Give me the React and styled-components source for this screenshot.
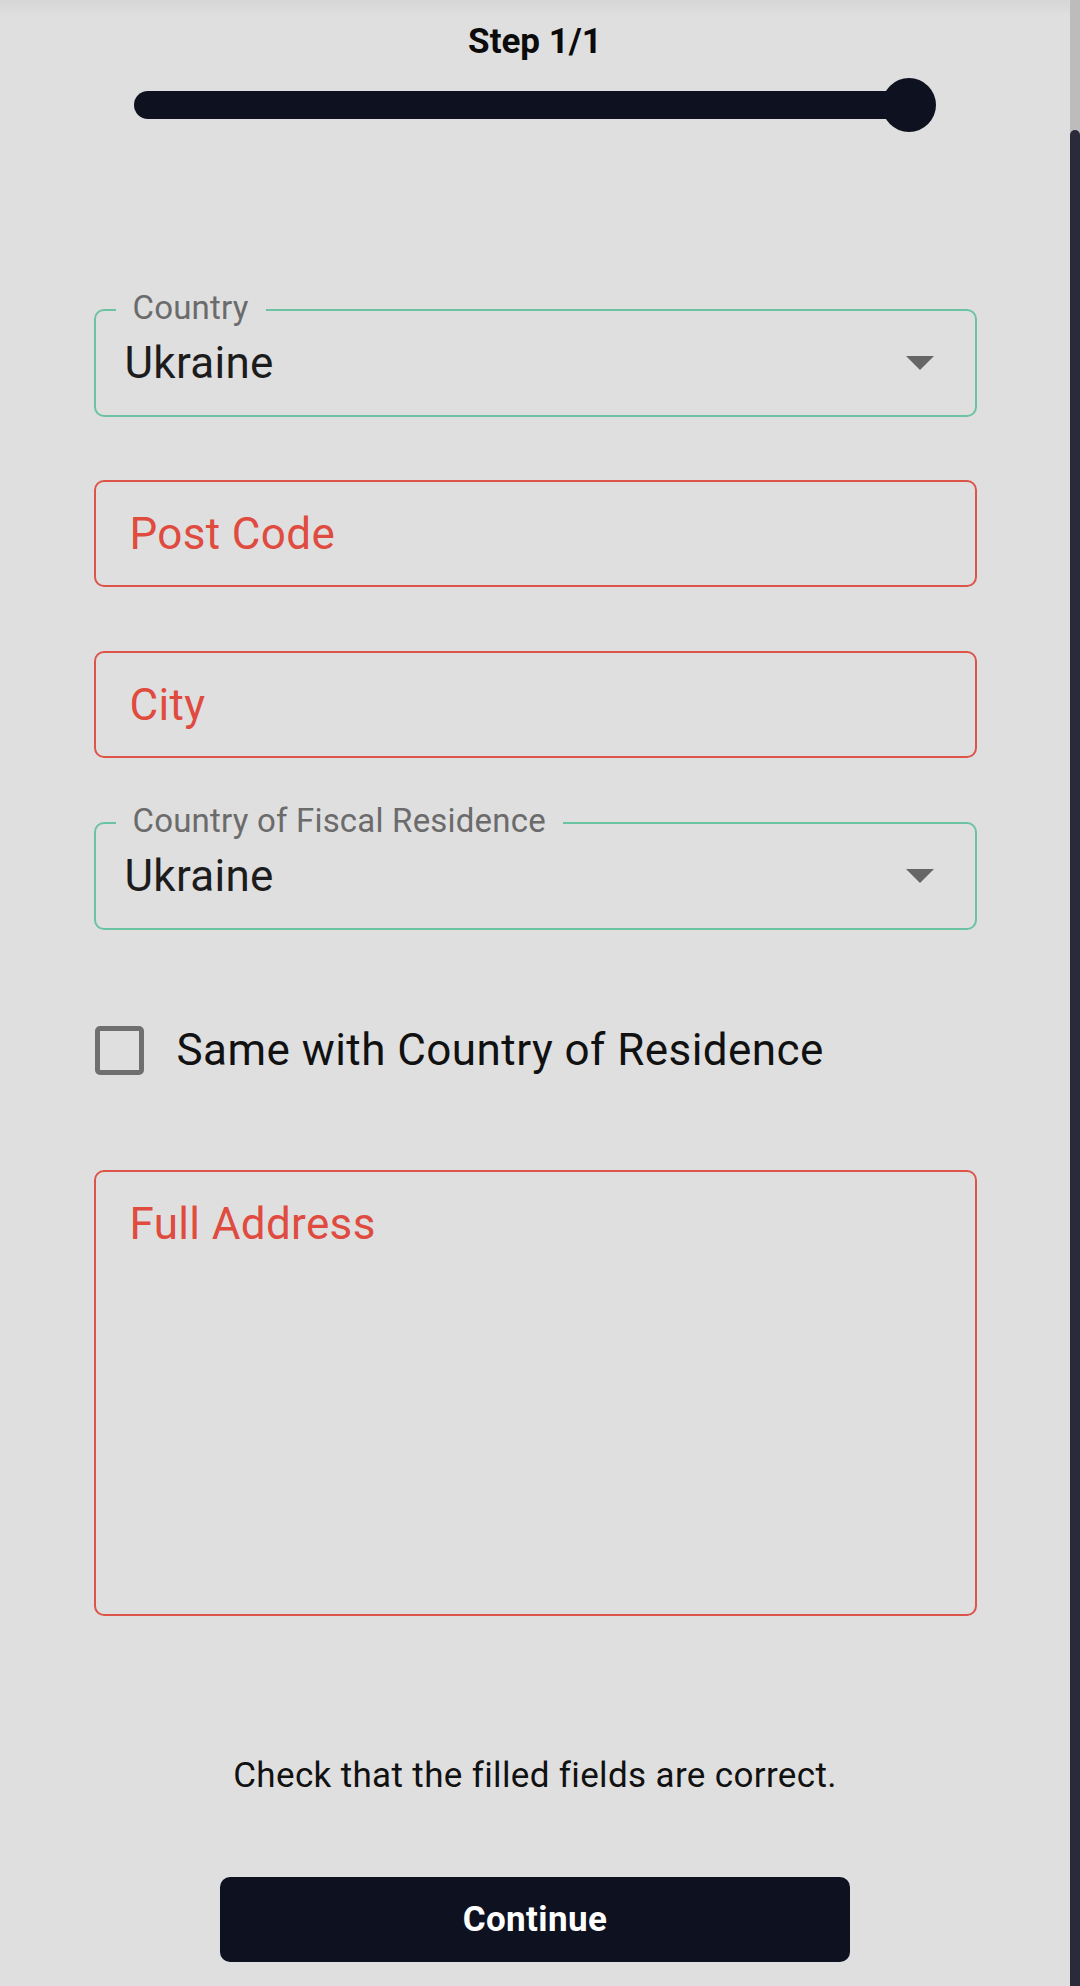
import styled, { createGlobalStyle } from "styled-components";

const GlobalStyle = createGlobalStyle`
  html, body {
    margin: 0;
    padding: 0;
    background: #dfdfdf;
    overflow: hidden;
  }
  body {
    font-family: Roboto, "Noto Sans", sans-serif;
  }
  * {
    box-sizing: border-box;
  }
`;

const BG = "#dfdfdf";
const DARK = "#0e1120";
const GREEN = "#6cc3a1";
const RED = "#dd5449";
const RED_TEXT = "#e04b3f";

const Screen = styled.div`
  display: grid;
  grid-template-columns: 1fr 10px;
  height: 1986px;
  background: ${BG};
  overflow: hidden;
`;

const Main = styled.main`
  display: flex;
  flex-direction: column;
  align-items: center;
  background: linear-gradient(#d6d6d6, ${BG} 16px);
`;

const StepTitle = styled.h1`
  margin: 0;
  padding-top: 22px;
  font-size: 35px;
  line-height: 40px;
  font-weight: 700;
  color: #0b0b0b;
`;

const Slider = styled.div`
  margin-top: 16px;
  width: 802px;
  height: 54px;
  display: flex;
  align-items: center;
`;

const Track = styled.div`
  flex: 1;
  height: 28px;
  margin-right: -27px;
  border-radius: 14px;
  background: ${DARK};
`;

const Thumb = styled.div`
  width: 54px;
  height: 54px;
  border-radius: 50%;
  background: ${DARK};
`;

const Form = styled.form`
  width: 883px;
  margin-top: 177px;
  display: flex;
  flex-direction: column;
`;

const SelectBox = styled.div`
  position: relative;
  height: 108px;
  margin-top: ${(p) => p.$gap || 0}px;
  border: 2px solid ${GREEN};
  border-radius: 10px;
  display: flex;
  align-items: center;
  padding: 0 41px 0 29px;
`;

const FloatLabel = styled.span`
  position: absolute;
  top: -20px;
  left: 20px;
  padding: 0 17px;
  background: ${BG};
  font-size: 33px;
  line-height: 1;
  letter-spacing: 0.2px;
  color: #6b6b6b;
`;

const SelectValue = styled.span`
  flex: 1;
  font-size: 44px;
  line-height: 1;
  letter-spacing: 0.3px;
  color: #1c1c1c;
`;

const Input = styled.input`
  display: block;
  width: 100%;
  height: 107px;
  margin-top: ${(p) => p.$gap || 0}px;
  padding: 0 34px;
  border: 2px solid ${RED};
  border-radius: 10px;
  background: transparent;
  font-family: inherit;
  font-size: 44px;
  letter-spacing: 0.35px;
  color: #1c1c1c;
  outline: none;
  &::placeholder {
    color: ${RED_TEXT};
    opacity: 1;
  }
`;

const TextArea = styled.textarea`
  display: block;
  width: 100%;
  height: 446px;
  margin-top: 93px;
  padding: 26px 34px;
  border: 2px solid ${RED};
  border-radius: 10px;
  background: transparent;
  font-family: inherit;
  font-size: 44px;
  letter-spacing: 0.35px;
  line-height: 1.2;
  resize: none;
  outline: none;
  &::placeholder {
    color: ${RED_TEXT};
    opacity: 1;
  }
`;

const CheckRow = styled.label`
  margin-top: 94px;
  display: flex;
  align-items: center;
  gap: 33px;
  padding-left: 1px;
`;

const CheckBox = styled.span`
  width: 49px;
  height: 49px;
  border: 5px solid #6f6f6f;
  border-radius: 5px;
`;

const CheckText = styled.span`
  font-size: 44px;
  line-height: 1.2;
  letter-spacing: 0.45px;
  color: #111;
`;

const Hint = styled.p`
  margin: 140px 0 0;
  text-align: center;
  font-size: 35px;
  line-height: 40px;
  letter-spacing: 0.35px;
  color: #111;
`;

const ContinueButton = styled.button`
  align-self: center;
  margin-top: 81px;
  width: 630px;
  height: 85px;
  border: none;
  border-radius: 10px;
  background: ${DARK};
  color: #fff;
  font-family: inherit;
  font-size: 35px;
  letter-spacing: 0.4px;
  font-weight: 700;
`;

const ScrollBar = styled.div`
  display: flex;
  flex-direction: column;
  background: #bcbcbc;
`;

const ScrollThumb = styled.div`
  flex: 1;
  margin-top: 130px;
  border-radius: 5px 5px 0 0;
  background: #2a2a3a;
`;

const Caret = () => (
  <svg width="28" height="14" viewBox="0 0 28 14">
    <path d="M0 0h28L14 14z" fill="#666" />
  </svg>
);

const Select = ({ label, value, gap }) => (
  <SelectBox $gap={gap}>
    <FloatLabel>{label}</FloatLabel>
    <SelectValue>{value}</SelectValue>
    <Caret />
  </SelectBox>
);

export default function App() {
  return (
    <>
      <GlobalStyle />
      <Screen>
        <Main>
          <StepTitle>Step 1/1</StepTitle>
          <Slider>
            <Track />
            <Thumb />
          </Slider>
          <Form onSubmit={(e) => e.preventDefault()}>
            <Select label="Country" value="Ukraine" />
            <Input $gap={63} placeholder="Post Code" />
            <Input $gap={64} placeholder="City" />
            <Select gap={64} label="Country of Fiscal Residence" value="Ukraine" />
            <CheckRow>
              <CheckBox />
              <CheckText>Same with Country of Residence</CheckText>
            </CheckRow>
            <TextArea placeholder="Full Address" />
            <Hint>Check that the filled fields are correct.</Hint>
            <ContinueButton type="button">Continue</ContinueButton>
          </Form>
        </Main>
        <ScrollBar>
          <ScrollThumb />
        </ScrollBar>
      </Screen>
    </>
  );
}
